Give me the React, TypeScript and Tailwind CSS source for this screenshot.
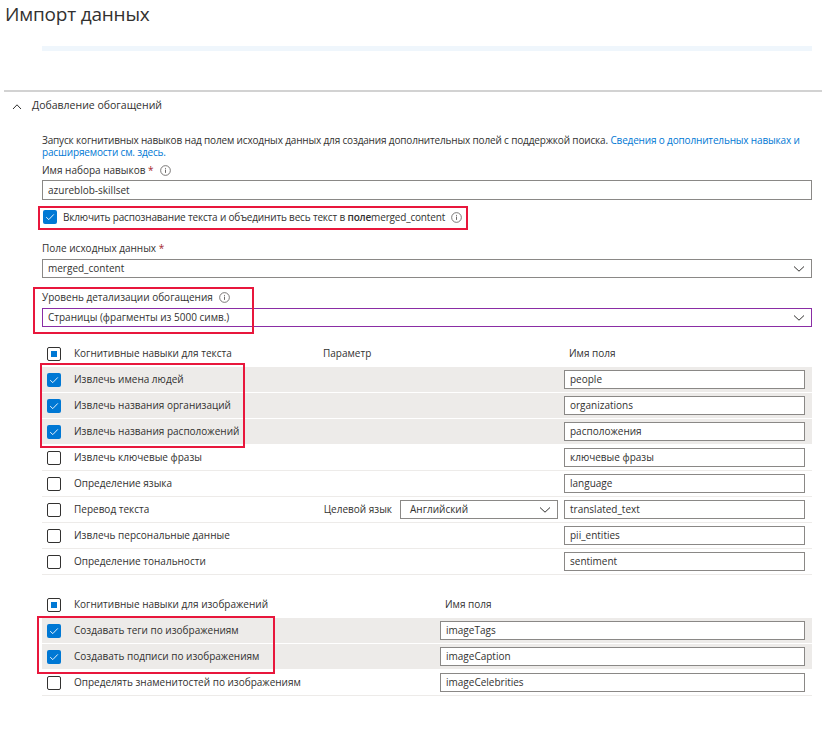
import React from "react";

const FONT = "font-['Open_Sans','Noto_Sans',sans-serif]";

function Info() {
  return (
    <svg width="11" height="11" viewBox="0 0 12 12" className="inline-block shrink-0" aria-hidden="true">
      <circle cx="6" cy="6" r="5.3" fill="none" stroke="#605e5c" strokeWidth="0.9" />
      <rect x="5.5" y="5" width="1" height="3.6" fill="#605e5c" />
      <rect x="5.5" y="3.2" width="1" height="1" fill="#605e5c" />
    </svg>
  );
}

function Chevron() {
  return (
    <svg width="12" height="8" viewBox="0 0 12 8" aria-hidden="true">
      <path d="M1 1.5 L6 6.2 L11 1.5" fill="none" stroke="#323130" strokeWidth="1" />
    </svg>
  );
}

function Check({ state }: { state: "on" | "off" | "mixed" }) {
  if (state === "on") {
    return (
      <span className="flex h-[14px] w-[14px] items-center justify-center rounded-[2px] bg-[#0078d4]">
        <svg width="10" height="8" viewBox="0 0 10 8" aria-hidden="true">
          <path d="M1.2 4.2 L3.8 6.6 L8.8 1.4" fill="none" stroke="#ffffff" strokeWidth="0.9" />
        </svg>
      </span>
    );
  }
  return (
    <span className="flex h-[14px] w-[14px] items-center justify-center rounded-[2px] border border-[#323130] bg-white">
      {state === "mixed" && <span className="h-[6px] w-[6px] bg-[#0078d4]" />}
    </span>
  );
}

function Field({ value, className = "" }: { value: string; className?: string }) {
  return (
    <div className={`flex h-[19px] items-center border border-[#8a8886] bg-white pl-[5px] text-[10px] text-[#323130] ${className}`}>
      {value}
    </div>
  );
}

function Select({ value, purple = false, padLeft = "pl-[5px]" }: { value: string; purple?: boolean; padLeft?: string }) {
  return (
    <div
      className={[
        "flex h-[19px] items-center justify-between bg-white pr-[6px] text-[10px] text-[#323130]",
        padLeft,
        purple ? "border border-[#8a2da5]" : "border border-[#8a8886]",
      ].join(" ")}
    >
      <span>{value}</span>
      <Chevron />
    </div>
  );
}

const TEXT_SKILLS = [
  { label: "Извлечь имена людей", field: "people", on: true },
  { label: "Извлечь названия организаций", field: "organizations", on: true },
  { label: "Извлечь названия расположений", field: "расположения", on: true },
  { label: "Извлечь ключевые фразы", field: "ключевые фразы", on: false },
  { label: "Определение языка", field: "language", on: false },
  { label: "Перевод текста", field: "translated_text", on: false, param: true },
  { label: "Извлечь персональные данные", field: "pii_entities", on: false },
  { label: "Определение тональности", field: "sentiment", on: false },
];

const IMAGE_SKILLS = [
  { label: "Создавать теги по изображениям", field: "imageTags", on: true },
  { label: "Создавать подписи по изображениям", field: "imageCaption", on: true },
  { label: "Определять знаменитостей по изображениям", field: "imageCelebrities", on: false },
];

export default function App() {
  return (
    <div className={`relative h-[732px] w-[822px] overflow-hidden bg-white text-[#323130] ${FONT}`}>
      {/* Заголовок */}
      <h1 className="pl-[5px] pt-[1px] text-[19px] leading-[26px] tracking-[-0.2px] text-[#323130]">Импорт данных</h1>

      <div className="ml-[42px] mr-[10px] mt-[19px] h-[5px] bg-[#eff6fc]" />

      <div className="ml-[4px] mt-[39px] h-[2px] bg-[#d2d2d2]" />

      {/* Секция */}
      <div className="flex h-[27px] items-center pl-[12px] pt-[1px] text-[10.5px]">
        <svg width="10" height="7" viewBox="0 0 10 7" aria-hidden="true">
          <path d="M1 6 L5 1.8 L9 6" fill="none" stroke="#323130" strokeWidth="1" />
        </svg>
        <span className="ml-[10px]">Добавление обогащений</span>
      </div>

      <div className="pl-[42px] pr-[10px] pt-[15px] text-[10px]">
        <p className="leading-[12px] tracking-[-0.16px]">
          Запуск когнитивных навыков над полем исходных данных для создания дополнительных полей с поддержкой поиска.{" "}
          <span className="text-[#0078d4]">Сведения о дополнительных навыках и расширяемости см. здесь.</span>
        </p>

        <div className="mt-[5px] flex h-[14px] items-center gap-[6px]">
          <span>
            Имя набора навыков <span className="text-[#a4262c]">*</span>
          </span>
          <Info />
        </div>
        <Field value="azureblob-skillset" className="mt-[3px] h-[20px]" />

        <div className="relative mt-[10px] flex h-[14px] items-center">
          <div className="pointer-events-none absolute -left-[4px] -top-[4px] h-[24px] w-[430px] border-2 border-[#e8173c]" />
          <span className="ml-[1px]">
            <Check state="on" />
          </span>
          <span className="ml-[6px] tracking-[-0.17px]">
            Включить распознавание текста и объединить весь текст в <b className="font-semibold">поле</b>merged_content
          </span>
          <span className="ml-[6px]">
            <Info />
          </span>
        </div>

        <div className="mt-[17px] flex h-[14px] items-center">
          <span>
            Поле исходных данных <span className="text-[#a4262c]">*</span>
          </span>
        </div>
        <div className="mt-[4px]">
          <Select value="merged_content" />
        </div>

        <div className="relative mt-[12px]">
          <div className="pointer-events-none absolute -left-[9px] -top-[3px] h-[47px] w-[221px] border-2 border-[#e8173c]" />
          <div className="flex h-[14px] items-center gap-[6px]">
            <span>Уровень детализации обогащения</span>
            <Info />
          </div>
          <div className="mt-[4px]">
            <Select value="Страницы (фрагменты из 5000 симв.)" purple />
          </div>
        </div>

        {/* Навыки для текста */}
        <div className="relative mt-[13px]">
          <div className="flex h-[27px] items-center">
            <span className="pl-[5px]">
              <Check state="mixed" />
            </span>
            <span className="ml-[13px] w-[249px]">Когнитивные навыки для текста</span>
            <span className="w-[246px]">Параметр</span>
            <span>Имя поля</span>
          </div>
          {TEXT_SKILLS.map((s) => (
            <div
              key={s.label}
              className={[
                "flex h-[26px] items-center border-b",
                s.on ? "border-white bg-[#edebe9]" : "border-[#edebe9] bg-white",
              ].join(" ")}
            >
              <span className="pl-[5px]">
                <Check state={s.on ? "on" : "off"} />
              </span>
              <span className="ml-[13px] flex-1">{s.label}</span>
              {s.param && (
                <div className="mr-[6px] flex items-center">
                  <span className="mr-[8px]">Целевой язык</span>
                  <div className="w-[158px]">
                    <Select value="Английский" padLeft="pl-[9px]" />
                  </div>
                </div>
              )}
              <Field value={s.field} className="mr-[7px] w-[241px]" />
            </div>
          ))}
          <div className="pointer-events-none absolute -left-[2px] top-[23px] h-[85px] w-[205px] border-2 border-[#e8173c]" />
        </div>

        {/* Навыки для изображений */}
        <div className="relative mt-[16px]">
          <div className="flex h-[27px] items-center">
            <span className="pl-[5px]">
              <Check state="mixed" />
            </span>
            <span className="ml-[13px] w-[371px]">Когнитивные навыки для изображений</span>
            <span>Имя поля</span>
          </div>
          {IMAGE_SKILLS.map((s) => (
            <div
              key={s.label}
              className={[
                "flex h-[26px] items-center border-b",
                s.on ? "border-white bg-[#edebe9]" : "border-[#edebe9] bg-white",
              ].join(" ")}
            >
              <span className="pl-[5px]">
                <Check state={s.on ? "on" : "off"} />
              </span>
              <span className="ml-[13px] flex-1">{s.label}</span>
              <Field value={s.field} className="mr-[7px] w-[365px]" />
            </div>
          ))}
          <div className="pointer-events-none absolute -left-[5px] top-[25px] h-[58px] w-[238px] border-2 border-[#e8173c]" />
        </div>
      </div>
    </div>
  );
}
